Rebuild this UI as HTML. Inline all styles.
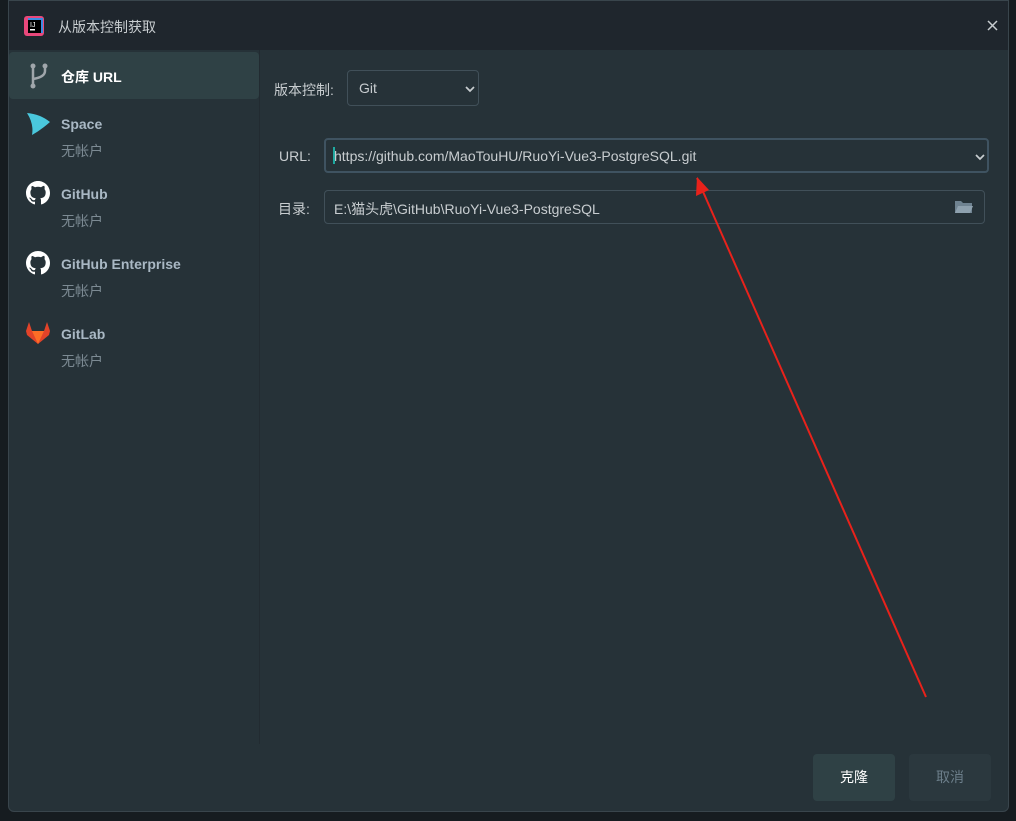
<html><head><style>
body{margin:0;width:1016px;height:821px;background:#161c20;font-family:"Liberation Sans","Noto Sans CJK SC",sans-serif;overflow:hidden;position:relative}
.dlg{position:absolute;left:8px;top:0;width:1001px;height:812px;background:#263238;border-radius:0 0 6px 6px;border:1px solid #39454c;box-sizing:border-box;overflow:hidden}
.title{position:absolute;left:0;top:0;right:0;height:49px;background:#1f262d}
.t{position:absolute;color:#c8cdd0;font-size:14px}
.side{position:absolute;left:0;top:49px;width:250px;height:694px;border-right:1px solid #222b31}
.sel{position:absolute;left:0;top:51px;width:250px;height:47px;background:#2f4145;border-radius:4px}
.n{position:absolute;left:52px;color:#a9b8c4;font-size:14px;font-weight:bold}
.s{position:absolute;left:52px;color:#7c8a93;font-size:14px}
.box{position:absolute;border:1px solid #415059;border-radius:4px;box-sizing:border-box}
.btn{position:absolute;top:753px;width:82px;height:47px;border-radius:4px;background:#2f4145;font-size:14px;text-align:center;line-height:47px}
</style></head><body>
<div class="dlg">
<div class="title"></div>
<svg style="position:absolute;left:15px;top:15px" width="20" height="20"><rect x="0" y="0" width="20" height="20" rx="3" fill="#e9487b"/><rect x="4" y="2" width="15" height="15" fill="#3b8be0"/><rect x="4" y="4" width="13" height="13" fill="#000"/><text x="6" y="11" font-size="7" fill="#fff" font-family="Liberation Sans">IJ</text><rect x="6" y="13" width="5" height="1.5" fill="#fff"/></svg>
<div class="t" style="left:49px;top:16px">从版本控制获取</div>
<svg style="position:absolute;left:978px;top:19px" width="11" height="11"><path d="M1 1L10 10M10 1L1 10" stroke="#c8cdd0" stroke-width="1.5"/></svg>
<div class="side"></div>
<div class="sel"></div>
<svg style="position:absolute;left:20px;top:62px" width="20" height="26"><g fill="none" stroke="#a0a6ab" stroke-width="2.5"><path d="M4 3V23"/><path d="M16 3V8Q16 14 4 16"/></g><circle cx="4" cy="3" r="2.5" fill="#a0a6ab"/><circle cx="4" cy="23" r="2.5" fill="#a0a6ab"/><circle cx="16" cy="3" r="2.5" fill="#a0a6ab"/></svg>
<div class="n" style="top:66px;color:#fff">仓库 URL</div>
<svg style="position:absolute;left:17px;top:111px" width="26" height="24"><path d="M1 1Q14 2 24 10Q15 18 6 23Q8 12 1 1Z" fill="#4ac8dd"/></svg>
<div class="n" style="top:115px">Space</div><div class="s" style="top:140px">无帐户</div>
<svg style="position:absolute;left:17px;top:180px" width="24" height="24" viewBox="0 0 16 16"><path fill="#fff" d="M8 0C3.58 0 0 3.58 0 8c0 3.54 2.29 6.53 5.47 7.59.4.07.55-.17.55-.38 0-.19-.01-.82-.01-1.49-2.01.37-2.53-.49-2.69-.94-.09-.23-.48-.94-.82-1.13-.28-.15-.68-.52-.01-.53.63-.01 1.08.58 1.23.82.72 1.21 1.87.87 2.33.66.07-.52.28-.87.51-1.07-1.78-.2-3.64-.89-3.64-3.95 0-.87.31-1.59.82-2.15-.08-.2-.36-1.02.08-2.12 0 0 .67-.21 2.2.82.64-.18 1.32-.27 2-.27.68 0 1.36.09 2 .27 1.53-1.04 2.2-.82 2.2-.82.44 1.1.16 1.92.08 2.12.51.56.82 1.27.82 2.15 0 3.07-1.87 3.75-3.65 3.95.29.25.54.73.54 1.48 0 1.07-.01 1.93-.01 2.2 0 .21.15.46.55.38A8.013 8.013 0 0016 8c0-4.42-3.58-8-8-8z"/></svg>
<div class="n" style="top:185px">GitHub</div><div class="s" style="top:210px">无帐户</div>
<svg style="position:absolute;left:17px;top:250px" width="24" height="24" viewBox="0 0 16 16"><path fill="#fff" d="M8 0C3.58 0 0 3.58 0 8c0 3.54 2.29 6.53 5.47 7.59.4.07.55-.17.55-.38 0-.19-.01-.82-.01-1.49-2.01.37-2.53-.49-2.69-.94-.09-.23-.48-.94-.82-1.13-.28-.15-.68-.52-.01-.53.63-.01 1.08.58 1.23.82.72 1.21 1.87.87 2.33.66.07-.52.28-.87.51-1.07-1.78-.2-3.64-.89-3.64-3.95 0-.87.31-1.59.82-2.150-.08-.2-.36-1.02.08-2.12 0 0 .67-.21 2.2.82.64-.18 1.32-.27 2-.27.68 0 1.36.09 2 .27 1.53-1.04 2.2-.82 2.2-.82.44 1.1.16 1.92.08 2.12.51.56.82 1.27.82 2.15 0 3.07-1.87 3.75-3.65 3.95.29.25.54.73.54 1.48 0 1.07-.01 1.93-.01 2.2 0 .21.15.46.55.38A8.013 8.013 0 0016 8c0-4.42-3.58-8-8-8z"/></svg>
<div class="n" style="top:255px">GitHub Enterprise</div><div class="s" style="top:280px">无帐户</div>
<svg style="position:absolute;left:17px;top:321px" width="24" height="22"><path d="M12 22L1 13L0 9L3 0L6 9H18L21 0L24 9L23 13Z" fill="#e24329"/><path d="M12 22L6 9H18Z" fill="#fc6d26"/></svg>
<div class="n" style="top:325px">GitLab</div><div class="s" style="top:350px">无帐户</div>
<div class="t" style="left:265px;top:79px">版本控制:</div>
<div class="box" style="left:338px;top:69px;width:132px;height:36px"></div>
<div class="t" style="left:350px;top:79px">Git</div>
<svg style="position:absolute;left:456px;top:85px" width="10" height="7"><path d="M1 1L5 5L9 1" fill="none" stroke="#c8cdd0" stroke-width="1.7"/></svg>
<div class="t" style="left:270px;top:147px">URL:</div>
<div class="box" style="left:315px;top:137px;width:665px;height:35px;border:2px solid #3f5361"></div>
<div style="position:absolute;left:324px;top:146px;width:2px;height:17px;background:#1fa9a0"></div>
<div class="t" style="left:325px;top:147px">https://github.com/MaoTouHU/RuoYi-Vue3-PostgreSQL.git</div>
<svg style="position:absolute;left:966px;top:153px" width="10" height="7"><path d="M1 1L5 5L9 1" fill="none" stroke="#c8cdd0" stroke-width="1.7"/></svg>
<div class="t" style="left:269px;top:198px">目录:</div>
<div class="box" style="left:315px;top:189px;width:661px;height:34px"></div>
<div class="t" style="left:325px;top:198px">E:\猫头虎\GitHub\RuoYi-Vue3-PostgreSQL</div>
<svg style="position:absolute;left:946px;top:199px" width="18" height="14"><path d="M0 1H6L8 3H17V13H0Z" fill="#6f8391"/><path d="M3 6H18L15 13H0Z" fill="#8ea1ae"/></svg>
<div class="btn" style="left:804px;color:#fff">克隆</div>
<div class="btn" style="left:900px;color:#6c7e8a;background:#2b383e">取消</div>
</div>
<svg style="position:absolute;left:0;top:0" width="1016" height="821"><path d="M697 178L926 697" stroke="#e8221b" stroke-width="2"/><path d="M697 177L696 196L709 190Z" fill="#e8221b"/></svg>
</body></html>
